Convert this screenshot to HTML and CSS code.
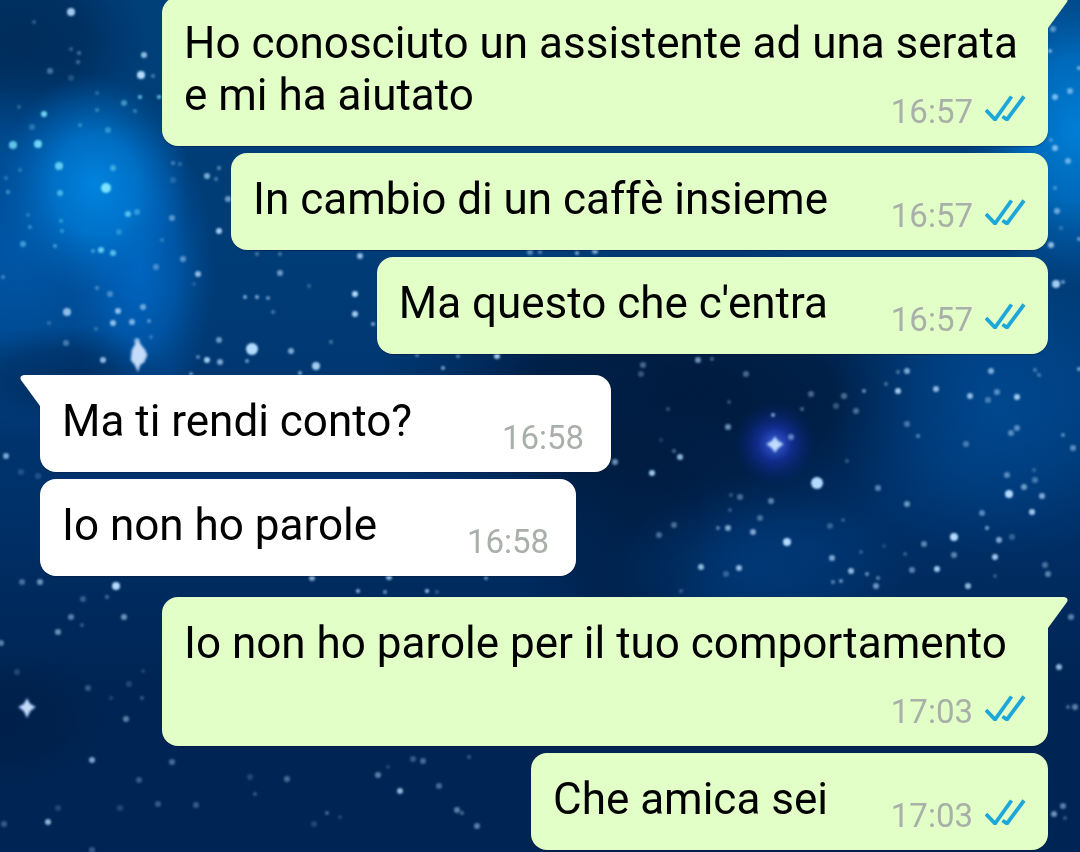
FILE: index.html
```html
<!DOCTYPE html>
<html lang="it">
<head>
    <meta charset="UTF-8">
    <meta name="viewport" content="width=device-width, initial-scale=1.0">
    <title>Chat</title>
    <link rel="stylesheet" href="styles.css">
</head>
<body>
    <svg class="wallpaper" viewBox="0 0 1080 852" preserveAspectRatio="xMidYMid slice" aria-hidden="true">
        <defs>
            <linearGradient id="sky" x1="0" y1="0" x2="0" y2="1">
                <stop offset="0" stop-color="#004079"/>
                <stop offset="0.35" stop-color="#003b76"/>
                <stop offset="0.6" stop-color="#003068"/>
                <stop offset="0.8" stop-color="#002554"/>
                <stop offset="1" stop-color="#002454"/>
            </linearGradient>
            <radialGradient id="bright">
                <stop offset="0" stop-color="#008ae6"/>
                <stop offset="0.45" stop-color="#007dd8" stop-opacity="0.8"/>
                <stop offset="1" stop-color="#0064b8" stop-opacity="0"/>
            </radialGradient>
            <radialGradient id="mid">
                <stop offset="0" stop-color="#0069c8"/>
                <stop offset="0.5" stop-color="#0062bc" stop-opacity="0.7"/>
                <stop offset="1" stop-color="#0058a8" stop-opacity="0"/>
            </radialGradient>
            <radialGradient id="dark">
                <stop offset="0" stop-color="#001a3c"/>
                <stop offset="0.5" stop-color="#001c40" stop-opacity="0.85"/>
                <stop offset="1" stop-color="#002555" stop-opacity="0"/>
            </radialGradient>
            <radialGradient id="halo">
                <stop offset="0" stop-color="#3c63e0"/>
                <stop offset="0.4" stop-color="#1530a0" stop-opacity="0.8"/>
                <stop offset="1" stop-color="#062070" stop-opacity="0"/>
            </radialGradient>
            <filter id="glow" x="0" y="0" width="1080" height="852" filterUnits="userSpaceOnUse">
                <feGaussianBlur stdDeviation="0.8"/>
            </filter>
        </defs>
        <rect width="1080" height="852" fill="url(#sky)"/>
        <ellipse cx="20" cy="40" rx="130" ry="100" fill="url(#dark)" opacity="0.5"/>
        <ellipse cx="20" cy="250" rx="170" ry="190" fill="url(#mid)" opacity="0.6"/>
        <ellipse cx="140" cy="270" rx="75" ry="150" fill="url(#mid)" opacity="0.9"/>
        <ellipse cx="95" cy="185" rx="95" ry="110" fill="url(#bright)" opacity="0.9"/>
        <ellipse cx="60" cy="375" rx="110" ry="50" fill="url(#dark)" opacity="0.4"/>
        <ellipse cx="680" cy="400" rx="310" ry="160" fill="url(#dark)"/>
        <ellipse cx="630" cy="520" rx="130" ry="160" fill="url(#dark)" opacity="0.6"/>
        <ellipse cx="1000" cy="410" rx="170" ry="150" fill="url(#mid)" opacity="0.35"/>
        <ellipse cx="760" cy="570" rx="150" ry="80" fill="url(#mid)" opacity="0.2"/>
        <ellipse cx="1075" cy="130" rx="110" ry="160" fill="url(#bright)" opacity="0.85"/>
        <ellipse cx="10" cy="720" rx="120" ry="80" fill="url(#dark)" opacity="0.4"/>
        <ellipse cx="775" cy="444" rx="42" ry="42" fill="url(#halo)"/>
        <g filter="url(#glow)">
            <g id="stars"></g>
            <path class="big-star" d="M137 339l4 6 4 5 2 5-3 7-4 3-2 6-3-6-4-5 1-10 3-5z"/>
            <path class="big-star" d="M775 437l3 4 5 3-5 4-3 4-3-4-5-4 5-3z"/>
            <path class="big-star" d="M27 699l3 5 5 3-5 4-3 6-3-6-5-4 5-3z"/>
        </g>
    </svg>

    <svg class="symbols" aria-hidden="true">
        <symbol id="read" viewBox="0 0 41 26">
            <path d="M1 15L10 24.5L26.5 1.5M17.5 21.5L22 24.5L39 1.5" fill="none" stroke="#1ba7d9" stroke-width="3.8"/>
        </symbol>
        <symbol id="tail" viewBox="0 0 22 32">
            <path d="M0 0H18Q23 1 21 5L2 31H0Z" fill="currentColor"/>
        </symbol>
    </svg>

    <main class="chat">
        <div class="group out">
            <div class="bubble first">
                <svg class="tail"><use href="#tail"/></svg>
                <p class="text">Ho conosciuto un assistente ad una serata e mi ha aiutato<span class="spacer"></span></p>
                <div class="meta"><time>16:57</time><svg class="ticks" role="img" aria-label="Letto"><use href="#read"/></svg></div>
            </div>
            <div class="bubble">
                <p class="text">In cambio di un caffè insieme<span class="spacer"></span></p>
                <div class="meta"><time>16:57</time><svg class="ticks" role="img" aria-label="Letto"><use href="#read"/></svg></div>
            </div>
            <div class="bubble">
                <p class="text">Ma questo che c'entra<span class="spacer"></span></p>
                <div class="meta"><time>16:57</time><svg class="ticks" role="img" aria-label="Letto"><use href="#read"/></svg></div>
            </div>
        </div>

        <div class="group in">
            <div class="bubble first">
                <svg class="tail"><use href="#tail"/></svg>
                <p class="text">Ma ti rendi conto?<span class="spacer"></span></p>
                <div class="meta"><time>16:58</time></div>
            </div>
            <div class="bubble">
                <p class="text">Io non ho parole<span class="spacer"></span></p>
                <div class="meta"><time>16:58</time></div>
            </div>
        </div>

        <div class="group out">
            <div class="bubble first">
                <svg class="tail"><use href="#tail"/></svg>
                <p class="text">Io non ho parole per il tuo comportamento<span class="spacer"></span></p>
                <div class="meta"><time>17:03</time><svg class="ticks" role="img" aria-label="Letto"><use href="#read"/></svg></div>
            </div>
            <div class="bubble">
                <p class="text">Che amica sei<span class="spacer"></span></p>
                <div class="meta"><time>17:03</time><svg class="ticks" role="img" aria-label="Letto"><use href="#read"/></svg></div>
            </div>
        </div>
    </main>

    <script src="script.js"></script>
</body>
</html>
```

FILE: styles.css
```css
* {
    box-sizing: border-box;
}
body {
    margin: 0;
    min-height: 100vh;
    overflow: hidden;
    background-color: #003067;
    font-family: Roboto, sans-serif;
}
.wallpaper {
    position: fixed;
    top: 0;
    left: 0;
    width: 100%;
    height: 100%;
    z-index: -1;
}
.big-star {
    fill: #c4dcfa;
    stroke: #8fb8ea;
    stroke-opacity: 0.5;
    stroke-width: 2;
    stroke-linejoin: round;
}
.symbols {
    display: none;
}
.chat {
    display: flex;
    flex-direction: column;
    gap: 21px;
    margin-top: -3px;
    padding: 0 32px 0 40px;
}
.group {
    display: flex;
    flex-direction: column;
    gap: 7px;
}
.out {
    align-items: flex-end;
    color: #e1ffc7;
}
.in {
    align-items: flex-start;
    color: #fff;
}
.bubble {
    position: relative;
    max-width: min(886px, 100%);
    padding: 20px 22px 25px;
    border-radius: 16px;
    background-color: currentColor;
    box-shadow: 0 1px 1px rgba(0, 20, 50, 0.4);
}
.out .first {
    border-top-right-radius: 0;
}
.in .first {
    border-top-left-radius: 0;
}
.tail {
    position: absolute;
    top: 0;
    left: 100%;
    width: 22px;
    height: 32px;
    margin-left: -2px;
}
.in .tail {
    left: auto;
    right: 100%;
    margin: 0 -2px 0 0;
    transform: scaleX(-1);
}
.text {
    margin: 0;
    color: #000;
    font-size: 44px;
    line-height: 52px;
}
.spacer {
    display: inline-block;
    width: 198px;
    height: 1px;
}
.in .spacer {
    width: 177px;
}
.meta {
    position: absolute;
    right: 22px;
    bottom: 17px;
    display: flex;
    align-items: flex-start;
    gap: 12px;
    color: #a9afa9;
    font-size: 33px;
    line-height: 34px;
}
.in .meta {
    right: 27px;
}
.ticks {
    width: 41px;
    height: 26px;
    overflow: visible;
}
```

FILE: script.js
```js
// x, y, radius, opacity
const stars = [
    [71, 12, 4, 0.9], [34, 22, 2, 0.3], [71, 49, 2, 0.3], [79, 53, 2, 0.4], [78, 62, 2, 0.4], [50, 71, 3, 0.4],
    [71, 78, 3, 0.2], [144, 55, 3, 0.8], [141, 75, 4, 1], [153, 76, 2, 0.4], [140, 97, 2, 0.8], [159, 97, 2, 0.8],
    [97, 93, 2, 0.3], [124, 103, 3, 0.5], [135, 111, 2, 0.4], [97, 110, 2, 0.4], [44, 114, 3, 0.9], [19, 107, 2, 0.3],
    [32, 127, 3, 0.3], [80, 125, 2, 0.4], [108, 130, 3, 0.4], [13, 145, 4, 0.8], [38, 144, 4, 0.9], [59, 166, 4, 0.8],
    [113, 168, 3, 0.5], [106, 188, 5, 1], [60, 193, 3, 0.6], [8, 192, 2, 0.5], [20, 170, 2, 0.3], [6, 178, 2, 0.3],
    [128, 214, 3, 0.7], [137, 212, 3, 0.4], [28, 215, 2, 0.3], [30, 227, 2, 0.4], [61, 221, 2, 0.4], [62, 231, 2, 0.4],
    [23, 244, 3, 0.5], [55, 246, 2, 0.5], [119, 232, 3, 0.3], [93, 251, 2, 0.5], [101, 250, 3, 0.8], [113, 253, 3, 0.7],
    [156, 267, 3, 0.4], [172, 218, 3, 0.5], [162, 240, 2, 0.3], [3, 277, 2, 0.4], [97, 288, 2, 0.4], [110, 294, 3, 0.4],
    [67, 312, 4, 0.8], [118, 311, 3, 0.8], [113, 323, 3, 0.8], [132, 322, 3, 0.7], [143, 307, 3, 0.6], [149, 321, 2, 0.5],
    [49, 323, 2, 0.3], [66, 343, 3, 0.4], [96, 329, 2, 0.3], [103, 360, 3, 0.8], [137, 341, 3, 0.6], [151, 337, 2, 0.3],
    [173, 163, 2, 0.4], [180, 164, 2, 0.3], [173, 180, 3, 0.2], [207, 176, 3, 0.7], [219, 168, 2, 0.5], [216, 179, 2, 0.4],
    [228, 199, 3, 0.6], [219, 231, 3, 0.9], [183, 259, 3, 0.5], [198, 274, 3, 0.8], [194, 284, 2, 0.2], [257, 254, 2, 0.4],
    [280, 254, 2, 0.4], [280, 273, 3, 0.6], [309, 286, 2, 0.3], [245, 297, 2, 0.7], [257, 297, 2, 0.7], [268, 298, 2, 0.6],
    [273, 312, 2, 0.4], [360, 256, 3, 0.8], [355, 294, 3, 1], [355, 314, 3, 0.9], [373, 324, 2, 0.7], [219, 340, 3, 0.6],
    [252, 349, 6, 1], [247, 361, 2, 0.6], [291, 351, 3, 0.7], [331, 342, 2, 0.4], [198, 357, 2, 0.5], [207, 360, 3, 0.9],
    [220, 362, 3, 0.7], [316, 366, 4, 0.9], [300, 373, 2, 0.7], [191, 374, 2, 0.6], [417, 355, 2, 0.5], [458, 356, 2, 0.5],
    [497, 356, 3, 0.9], [443, 368, 2, 0.7], [530, 252, 3, 0.5], [577, 253, 2, 0.7], [595, 251, 3, 0.7], [540, 252, 2, 0.5],
    [1053, 29, 3, 0.5], [1050, 51, 2, 0.7], [1079, 68, 2, 0.7], [1070, 91, 3, 0.6], [1055, 97, 3, 0.7], [1055, 148, 3, 0.7],
    [1051, 140, 2, 0.4], [1068, 161, 3, 0.6], [1055, 188, 2, 0.4], [1057, 211, 3, 0.6], [1061, 228, 2, 0.3], [1051, 245, 3, 0.8],
    [1079, 239, 2, 0.6], [1056, 284, 4, 0.9], [1063, 282, 2, 0.6], [643, 365, 3, 0.4], [641, 374, 3, 0.3], [698, 360, 3, 0.6],
    [712, 359, 2, 0.4], [746, 374, 3, 0.4], [811, 394, 3, 0.4], [844, 396, 3, 0.4], [864, 391, 2, 0.6], [898, 391, 3, 0.9],
    [886, 384, 2, 0.4], [898, 372, 2, 0.4], [907, 371, 3, 0.7], [936, 389, 3, 0.8], [970, 396, 3, 0.8], [997, 392, 3, 0.5],
    [988, 400, 3, 0.4], [1017, 397, 3, 0.9], [991, 371, 3, 0.7], [1035, 370, 2, 0.4], [1039, 375, 2, 0.4], [1079, 369, 2, 0.7],
    [729, 402, 2, 0.3], [668, 409, 2, 0.3], [728, 427, 3, 0.6], [773, 415, 2, 0.7], [802, 409, 2, 0.4], [836, 406, 3, 0.3],
    [856, 411, 3, 0.4], [791, 437, 3, 0.5], [907, 424, 3, 0.4], [918, 436, 2, 0.5], [1017, 428, 3, 0.5], [1011, 433, 3, 0.5],
    [1063, 435, 2, 0.5], [1073, 448, 3, 0.5], [966, 444, 3, 0.4], [615, 462, 3, 0.6], [652, 473, 3, 0.9], [680, 457, 3, 0.8],
    [674, 451, 2, 0.4], [661, 440, 2, 0.2], [817, 483, 6, 1], [847, 461, 2, 0.3], [878, 488, 3, 0.5], [771, 501, 3, 0.5],
    [740, 497, 3, 0.4], [731, 495, 2, 0.3], [760, 518, 3, 0.4], [753, 532, 3, 0.7], [728, 528, 3, 0.7], [718, 528, 2, 0.5],
    [730, 510, 2, 0.3], [787, 542, 4, 1], [674, 525, 3, 0.4], [659, 535, 3, 0.4], [701, 567, 3, 0.8], [739, 568, 3, 0.8],
    [726, 574, 3, 0.3], [907, 504, 3, 0.6], [843, 520, 2, 0.3], [830, 526, 3, 0.3], [832, 558, 3, 0.7], [851, 571, 3, 0.8],
    [841, 581, 2, 0.6], [833, 582, 2, 0.5], [867, 574, 2, 0.6], [878, 578, 2, 0.5], [876, 586, 3, 0.6], [954, 537, 4, 1],
    [954, 555, 3, 0.5], [924, 544, 3, 0.5], [905, 554, 2, 0.3], [912, 570, 3, 0.5], [937, 569, 3, 0.9], [968, 586, 3, 0.8],
    [995, 557, 3, 0.9], [999, 540, 3, 0.7], [1012, 537, 3, 0.3], [987, 528, 2, 0.7], [982, 513, 3, 0.5], [1009, 494, 4, 1],
    [1007, 475, 3, 0.5], [1024, 487, 3, 0.6], [1034, 470, 2, 0.3], [1035, 480, 3, 0.4], [1042, 496, 3, 0.7], [1032, 512, 3, 0.9],
    [1045, 565, 3, 0.4], [1048, 574, 3, 0.5], [995, 576, 2, 0.3], [861, 552, 2, 0.3], [884, 546, 2, 0.2], [681, 591, 2, 0.3],
    [6, 456, 3, 0.7], [21, 472, 3, 0.2], [38, 476, 3, 0.2], [22, 582, 3, 0.4], [40, 582, 3, 0.6], [116, 586, 4, 1],
    [107, 597, 2, 0.4], [83, 599, 3, 0.3], [71, 617, 3, 0.5], [82, 625, 2, 0.3], [124, 617, 3, 0.6], [58, 632, 3, 0.6],
    [1, 643, 3, 0.5], [17, 672, 3, 0.2], [88, 688, 3, 0.3], [111, 698, 2, 0.2], [126, 719, 3, 0.5], [129, 684, 3, 0.2],
    [142, 698, 2, 0.3], [143, 671, 2, 0.2], [92, 760, 3, 0.7], [172, 762, 3, 0.4], [139, 780, 3, 0.3], [58, 808, 3, 0.2],
    [48, 822, 3, 0.8], [4, 824, 3, 0.3], [158, 804, 3, 0.3], [120, 808, 3, 0.2], [196, 805, 3, 0.3], [250, 777, 3, 0.2],
    [287, 779, 3, 0.4], [255, 794, 2, 0.3], [378, 775, 3, 0.5], [388, 767, 2, 0.2], [400, 791, 3, 0.8], [413, 759, 3, 0.3],
    [423, 761, 3, 0.4], [439, 786, 3, 0.4], [457, 810, 3, 0.5], [462, 813, 2, 0.4], [477, 826, 3, 0.5], [469, 757, 2, 0.3],
    [327, 813, 2, 0.4], [340, 817, 2, 0.2], [314, 824, 3, 0.2], [92, 850, 3, 0.3], [312, 578, 3, 0.7], [389, 577, 3, 0.8],
    [358, 591, 2, 0.8], [385, 592, 2, 0.6], [427, 591, 2, 0.9], [437, 592, 2, 0.3], [486, 578, 2, 0.6],
    [1071, 617, 3, 0.5], [1059, 667, 3, 0.8], [1068, 707, 2, 0.4], [1075, 707, 3, 0.5], [1063, 806, 3, 0.5], [1054, 814, 3, 0.6],
    [1065, 818, 2, 0.3]
];

const group = document.getElementById("stars");

stars.forEach(([x, y, r, opacity]) => {
    const circle = document.createElementNS("http://www.w3.org/2000/svg", "circle");
    circle.setAttribute("cx", x);
    circle.setAttribute("cy", y);
    circle.setAttribute("r", r);
    // stars over the bright cloud look more cyan
    circle.setAttribute("fill", y > 80 && y < 260 && x < 170 ? "#7be4ff" : "#b4dcff");
    circle.setAttribute("opacity", opacity);
    group.appendChild(circle);
});
```
